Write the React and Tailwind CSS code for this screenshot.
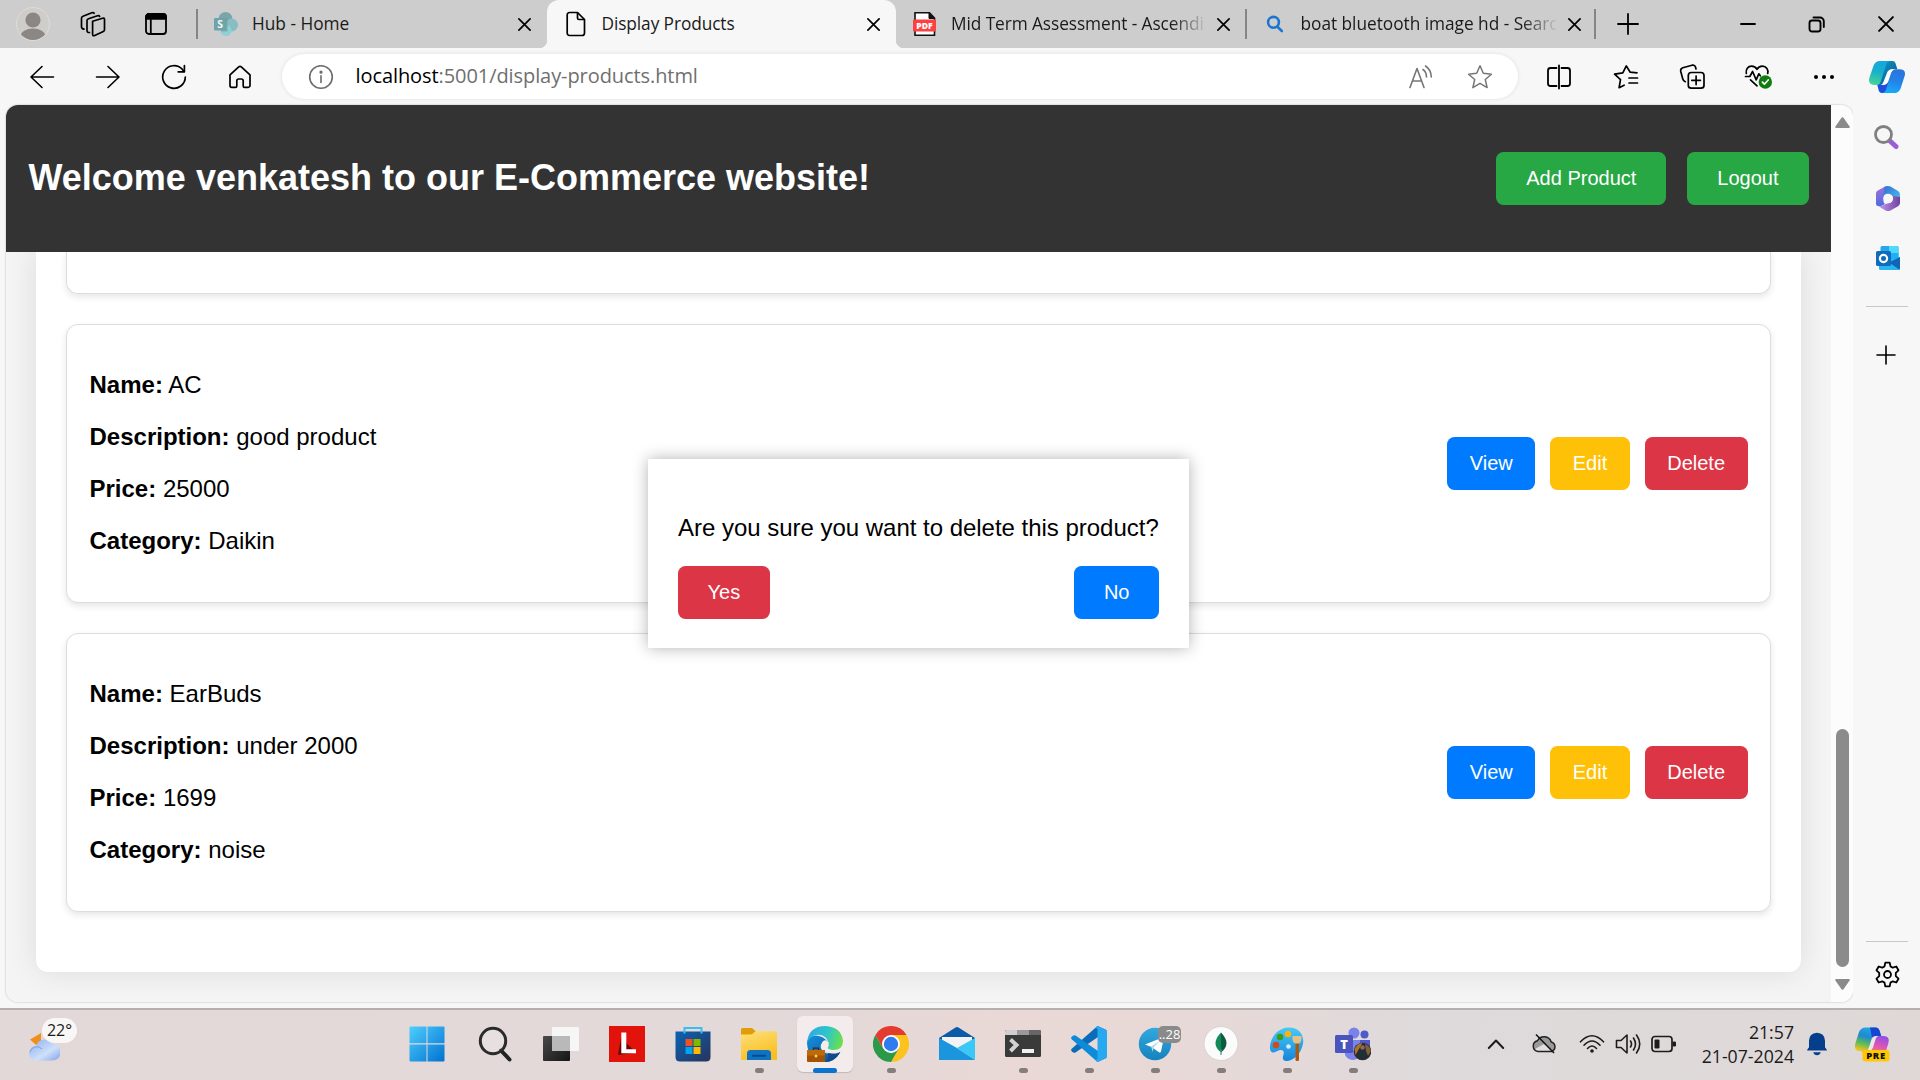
import React from "react";

/* ---------- browser chrome icons ---------- */

function Svg({ w = 24, h, vb = "0 0 24 24", className = "", children, sw = 1.6 }) {
  return (
    <svg
      width={w}
      height={h ?? w}
      viewBox={vb}
      fill="none"
      stroke="currentColor"
      strokeWidth={sw}
      strokeLinecap="round"
      strokeLinejoin="round"
      className={"block shrink-0 " + className}
    >
      {children}
    </svg>
  );
}

const Avatar = () => (
  <svg width="34" height="34" viewBox="0 0 34 34" className="block shrink-0">
    <defs>
      <clipPath id="av"><circle cx="17" cy="17" r="16" /></clipPath>
    </defs>
    <circle cx="17" cy="17" r="16.5" fill="#cfcdca" stroke="#dedcd8" />
    <g clipPath="url(#av)" fill="#8b8784">
      <circle cx="17" cy="13" r="7.6" />
      <ellipse cx="17" cy="29.5" rx="12.4" ry="8" />
    </g>
  </svg>
);

const Workspaces = () => (
  <Svg w={26} vb="0 0 26 26" sw={1.7}>
    <path d="M12.6 10.2 22.6 7.2q1.9-.5 1.9 1.4v10.2q0 1.2-1.2 1.7l-8.6 4q-2 .9-2.100-1.200V11.600q0-1 0-1.400z" />
    <path d="M9.500 21.500q-2.500 .2-2.500-2.200V9.800q0-1.500 1.500-2L17.500 4.800q1.600-.4 2.100.6" />
    <path d="M4 18.200Q1.500 18 1.500 15.800V7.200q0-1.500 1.500-2L11.800 1.800q1.700-.5 2.300.5" />
  </Svg>
);

const TabActions = () => (
  <Svg w={24} vb="0 0 24 24" sw={1.8}>
    <rect x="2" y="2" width="20" height="20" rx="3" />
    <path d="M2 6.800V5a3 3 0 0 1 3-3h14a3 3 0 0 1 3 3v1.800z" fill="#000" />
    <path d="M6.800 7v15" />
  </Svg>
);

const CloseX = ({ size = 13, sw = 1.7 }) => (
  <Svg w={size} vb="0 0 13 13" sw={sw}>
    <path d="M.9.9l11.200 11.200M12.100.9.9 12.100" />
  </Svg>
);

const SharePoint = () => (
  <svg width="24" height="24" viewBox="0 0 24 24" className="block shrink-0">
    <circle cx="11.500" cy="7" r="7" fill="#7ba5a9" />
    <circle cx="17.500" cy="13" r="6.500" fill="#86bec4" />
    <circle cx="12" cy="18.500" r="5.500" fill="#8fd0d5" />
    <rect x="7" y="6" width="6.500" height="13.500" fill="#5f8f93" opacity=".5" />
    <rect x="0" y="6" width="12.500" height="12.500" rx="1" fill="#6fa3a8" />
    <text x="6.200" y="16" fontSize="10.500" fontWeight="700" textAnchor="middle" fill="#f2f7f7" fontFamily="Open Sans, sans-serif">S</text>
  </svg>
);

const FileIcon = () => (
  <Svg w={20} h={26} vb="0 0 20 26" sw={1.700}>
    <path d="M3.500 1.500h8L18.500 8.500v13.500a2.500 2.500 0 0 1-2.500 2.500H3.500a2.300 2.300 0 0 1-2.300-2.500V4a2.300 2.300 0 0 1 2.300-2.500z" />
    <path d="M11.500 1.800V7a1.500 1.500 0 0 0 1.500 1.500h5.200" />
  </Svg>
);

const PdfIcon = () => (
  <svg width="24" height="24" viewBox="0 0 24 24" className="block shrink-0">
    <path d="M2 .8h14.500L21.500 6v17.200H2z" fill="#fff" stroke="#111" strokeWidth="1.600" />
    <path d="M16 .5v6h6" fill="#111" stroke="#111" />
    <rect x="0" y="7.500" width="23" height="12" rx="1" fill="#fb4141" />
    <text x="11.500" y="16.800" fontSize="8.600" fontWeight="800" textAnchor="middle" fill="#fff" fontFamily="Open Sans, sans-serif">PDF</text>
  </svg>
);

const BingSearch = () => (
  <Svg w={18} vb="0 0 18 18" sw={2.600} className="text-[#1b76d1]">
    <circle cx="7.500" cy="7.300" r="5.400" />
    <path d="M11.600 11.800l4.200 4.200" />
  </Svg>
);

const Arrow = ({ flip }) => (
  <Svg w={26} vb="0 0 26 26" sw={1.600} className={flip ? "-scale-x-100" : ""}>
    <path d="M13 2.500 2 13l11 10.500M2.300 13H24.500" />
  </Svg>
);

const Refresh = () => (
  <Svg w={26} vb="0 0 26 26" sw={1.700}>
    <path d="M24.300 13A11.300 11.300 0 1 1 21.200 5.200L23 7.400" />
    <path d="M23.400 1.600v6.200h-6.200" />
  </Svg>
);

const Home = () => (
  <Svg w={24} vb="0 0 24 24" sw={1.700}>
    <path d="M2 9.800 10.700 1.900q1.300-1 2.600 0L22 9.800v10.700a1.800 1.800 0 0 1-1.800 1.800h-3.600a1.400 1.400 0 0 1-1.400-1.400v-5a1.900 1.900 0 0 0-1.900-1.900h-2.600a1.900 1.900 0 0 0-1.900 1.900v5a1.400 1.400 0 0 1-1.400 1.400H3.800A1.800 1.800 0 0 1 2 20.500z" />
  </Svg>
);

const Info = () => (
  <Svg w={26} vb="0 0 26 26" sw={1.600} className="text-[#6b6b6b]">
    <circle cx="13" cy="13" r="11.300" />
    <path d="M13 11.800v6.700" />
    <circle cx="13" cy="8.200" r=".8" fill="currentColor" />
  </Svg>
);

const ReadAloud = () => (
  <Svg w={26} vb="0 0 26 26" sw={1.600} className="text-[#767676]">
    <path d="M2 23.500 9 4.500l7 19M4.800 17h8.400" />
    <path d="M15 5.500q3.500 2.500 3.500 7.500" />
    <path d="M17.500 2q5.500 3.500 5.800 11" />
  </Svg>
);

const Star = () => (
  <Svg w={26} vb="0 0 26 26" sw={1.500} className="text-[#767676]">
    <path d="M13 1.800l3.300 7.500 8.100.9-6.100 5.300 1.800 8.100L13 19.400l-7.100 4.200 1.800-8.100-6.100-5.300 8.100-.9z" />
  </Svg>
);

const SplitScreen = () => (
  <Svg w={26} vb="0 0 26 26" sw={1.800}>
    <path d="M9.500 4H4.500A2.500 2.500 0 0 0 2 6.500v13A2.500 2.500 0 0 0 4.500 22h5M16.500 4h5A2.500 2.500 0 0 1 24 6.500v13a2.500 2.500 0 0 1-2.500 2.500h-5M13 1.500v23" />
    <path d="M9.500 4h1M9.500 22h1M15.500 4h1M15.500 22h1" />
  </Svg>
);

const Favorites = () => (
  <Svg w={26} vb="0 0 26 26" sw={1.700}>
    <path d="M24 8.800l-6.800-.6L13.300 1.900 9.800 8.900 1.600 10.200l5.900 5.500-1.400 8 5-2.500" />
    <path d="M16 14h8.500M16 19h8.500" />
  </Svg>
);

const Collections = () => (
  <Svg w={27} vb="0 0 27 27" sw={1.700}>
    <rect x="9.300" y="9.500" width="15.700" height="15.700" rx="3" />
    <path d="M17.100 13v8.600M12.800 17.300h8.600" />
    <path d="M6.300 18.700Q4.300 18 3.700 15.700L1.700 8.200Q1.300 5.500 3.800 4.700L13 2.200q2.800-.6 3.500 1.800l.5 2" />
  </Svg>
);

const Essentials = () => (
  <Svg w={29} h={26} vb="0 0 29 26" sw={1.700}>
    <path d="M2.300 9.500C1.500 5.500 4 2.200 7.600 2.200c2.400 0 4.400 1.300 5.400 3.100 1-1.800 3-3.100 5.400-3.100 4 0 6.300 3.500 5.300 7.300" />
    <path d="M1.500 12.500h4.300l2.800-5 3.600 8.300 2.600-6 1.500 2" />
    <path d="M6.500 15.800l6.500 6" />
    <circle cx="21.300" cy="18" r="6.700" fill="#107c10" stroke="none" />
    <path d="M18.400 18.200l2 2 3.800-4.200" stroke="#fff" />
  </Svg>
);

const Dots = () => (
  <svg width="22" height="6" viewBox="0 0 22 6" className="block">
    <circle cx="3" cy="3" r="2" /><circle cx="11" cy="3" r="2" /><circle cx="19" cy="3" r="2" />
  </svg>
);

const CopilotMark = () => (
  <svg width="36" height="32" viewBox="0 0 36 32" className="block shrink-0">
    <defs>
      <linearGradient id="cml" x1="0.500" y1="0" x2="0.300" y2="1">
        <stop offset="0" stopColor="#15a8dc" /><stop offset=".45" stopColor="#18b0cc" /><stop offset="1" stopColor="#45d693" />
      </linearGradient>
      <linearGradient id="cmr" x1="0.700" y1="0" x2="0.400" y2="1">
        <stop offset="0" stopColor="#2a73dc" /><stop offset=".5" stopColor="#2383e8" /><stop offset="1" stopColor="#18aaf8" />
      </linearGradient>
      <linearGradient id="cmt" x1="0" y1="0" x2="1" y2="1">
        <stop offset="0" stopColor="#0f9fd0" /><stop offset="1" stopColor="#0a4f86" />
      </linearGradient>
    </defs>
    <path d="M14 0h9.500q2.300 0 3 2.200l1.900 6H23.500q-3.500 0-4.600 3.400L15 24H8.500l5-14z" fill="url(#cmt)" />
    <path d="M8.200 23.500h5.500l7.500-12.500h5L19 30l-4 2h-2q-2.500 0-3.200-2.300z" fill="#1d4fdc" />
    <path d="M11 0h9.500q-2.500 1-3.500 4l-5.500 17q-1 3-3.500 3H5.300Q-1.200 23.600.3 17L4.500 4.800Q6.200 0 11 0z" fill="url(#cml)" />
    <path d="M26.500 8.300h4q6.800.2 5.200 6.500l-4 12.500q-1.700 4.700-6 4.700H13q3-.3 4-3.500l5.500-17q1-3.200 4-3.200z" fill="url(#cmr)" />
    <path d="M17.800 12.500q1-3.800 4.800-4.200h3.200q-2.500.3-3.500 3.200L19.500 20q-1.200 3.500-4.500 4h-3.500q2-.4 2.700-2.500z" fill="#fbfdff" />
  </svg>
);

/* ---------- side bar icons ---------- */

const SideSearch = () => (
  <svg width="26" height="26" viewBox="0 0 26 26" className="block">
    <path d="M17 17l6 5.500" stroke="#9a5fd6" strokeWidth="5" strokeLinecap="round" />
    <circle cx="10.500" cy="10.500" r="8" fill="none" stroke="#808080" strokeWidth="2.800" />
  </svg>
);

const M365 = () => (
  <svg width="26" height="27" viewBox="0 0 26 27" className="block">
    <defs>
      <linearGradient id="m1" x1="0" y1="0" x2="0" y2="1"><stop stopColor="#a86fd8" /><stop offset="1" stopColor="#4b6fe0" /></linearGradient>
      <linearGradient id="m2" x1="0" y1="0" x2="1" y2="1"><stop stopColor="#2f6fd0" /><stop offset="1" stopColor="#4fc3f0" /></linearGradient>
      <linearGradient id="m3" x1="0" y1="0" x2="1" y2="0"><stop stopColor="#c49af0" /><stop offset="1" stopColor="#7040a0" /></linearGradient>
    </defs>
    <path d="M11 1 2.800 5.500Q1 6.500 1 8.500v10.200Q1 21 3 21l3 .3 4-2.300q-1.500-1-1.500-3z" fill="url(#m1)" />
    <path d="M9.500 2Q12.500 0 15.500 1.600L23 6q2 1.200 2 3.500v8l-7-6.200-4.300-2.200q-1.300-.4-2.500.2L8 11z" fill="url(#m2)" />
    <path d="M25 12v6q0 2-2 3.300L15.500 25.500q-2.500 1.200-5 0L3.500 21.300q4.500 0 7-2.300l5.300-1.600Q18 16 18 13.500L17.500 11z" fill="url(#m3)" />
    <circle cx="13" cy="13.500" r="4.800" fill="#f7f7f7" />
  </svg>
);

const Outlook = () => (
  <svg width="26" height="26" viewBox="0 0 26 26" className="block">
    <path d="M7 1h15q1.500 0 1.500 1.500V18H5.500V2.500Q5.500 1 7 1z" fill="#28a8ea" />
    <path d="M14 1h8q1.500 0 1.500 1.500V8H14z" fill="#50d9ff" />
    <path d="M5.500 8H14v8H5.500z" fill="#0f78d0" />
    <path d="M14 8h9.500v7H14z" fill="#1db0f2" />
    <path d="M4 17.500 25 12v11.500q0 1.500-1.500 1.500H5.500Q4 25 4 23.500z" fill="#29b4f2" />
    <path d="M25 12v11q0 1-.8 1.600L14 17.500z" fill="#1066b5" />
    <rect x="1" y="6" width="15" height="15" rx="1.500" fill="#0f6cbd" />
    <circle cx="8.500" cy="13.500" r="3.600" fill="none" stroke="#fff" strokeWidth="2.200" />
  </svg>
);

const Gear = () => (
  <Svg w={27} vb="0 0 27 27" sw={1.800}>
    <path d="M11.300 1.700h4.400l.8 3.700 2.300 1.300 3.500-1.200 2.200 3.800-2.700 2.600v3.200l2.700 2.600-2.200 3.800-3.500-1.200-2.300 1.300-.8 3.700h-4.400l-.8-3.700-2.300-1.300-3.500 1.200-2.200-3.800 2.700-2.600v-3.200L2.500 9.300l2.200-3.800 3.500 1.200 2.300-1.300z" />
    <circle cx="13.500" cy="13.500" r="3.500" />
  </Svg>
);

/* ---------- task bar icons ---------- */

const Weather = () => (
  <svg width="31" height="30" viewBox="0 0 31 30" className="block">
    <defs>
      <linearGradient id="cl" x1="0" y1="0" x2="1" y2="1"><stop stopColor="#86aef0" /><stop offset=".6" stopColor="#cfe0fa" /><stop offset="1" stopColor="#7fa3e8" /></linearGradient>
    </defs>
    <path d="M1 8.500 12 2v8L7 14z" fill="#f0901c" />
    <path d="M7.500 29.500a7.200 7.200 0 0 1-.5-14.400 9.500 9.500 0 0 1 17-2.400 8.400 8.400 0 0 1-1.200 16.800z" fill="url(#cl)" />
    <path d="M1 21a7 7 0 0 1 12-3" stroke="#7ba0e0" fill="none" strokeWidth="1" />
  </svg>
);

const Windows = () => (
  <svg width="36" height="36" viewBox="0 0 36 36" className="block">
    <defs>
      <linearGradient id="wn" gradientUnits="userSpaceOnUse" x1="0" y1="0" x2="36" y2="36"><stop stopColor="#4fd0ff" /><stop offset="1" stopColor="#0070d0" /></linearGradient>
    </defs>
    <g fill="url(#wn)">
      <path d="M1.500.5h16v16.800H.5V1.500q0-1 1-1z" /><path d="M18.500.5h16q1 0 1 1v15.800h-17z" />
      <path d="M.5 18.500h17v17h-16q-1 0-1-1z" /><path d="M18.500 18.500h17v16q0 1-1 1h-16z" />
    </g>
  </svg>
);

const TaskSearch = () => (
  <svg width="34" height="36" viewBox="0 0 34 36" className="block">
    <path d="M23 24.500l8.500 9" stroke="#222" strokeWidth="4" strokeLinecap="round" />
    <circle cx="15" cy="15" r="12.700" fill="#fff" fillOpacity=".2" stroke="#2b2b2b" strokeWidth="3" />
  </svg>
);

const TaskView = () => (
  <svg width="36" height="36" viewBox="0 0 36 36" className="block">
    <defs>
      <linearGradient id="tv" x1="0" y1="0" x2="1" y2="1"><stop stopColor="#4a4a4a" /><stop offset="1" stopColor="#151515" /></linearGradient>
    </defs>
    <rect x="0" y="10" width="27" height="25" rx="1" fill="url(#tv)" />
    <rect x="9" y="1" width="27" height="24" rx="1" fill="#f6f6f6" />
    <rect x="9" y="10" width="18" height="15" fill="#b9b9b9" />
  </svg>
);

const LIcon = () => (
  <svg width="36" height="36" viewBox="0 0 36 36" className="block">
    <rect width="36" height="36" fill="#e2130b" />
    <path d="M12 12 9 29l18-2.500z" fill="#6b0805" />
    <path d="M12.300 6.500h5v16.800H27v4H12.300z" fill="#fff" />
  </svg>
);

const Store = () => (
  <svg width="36" height="36" viewBox="0 0 36 36" className="block">
    <defs>
      <linearGradient id="st" x1="0" y1="0" x2="1" y2="1"><stop stopColor="#0a63b4" /><stop offset="1" stopColor="#28335c" /></linearGradient>
    </defs>
    <path d="M.5 5.500h35V31q0 4.500-4.500 4.500H5Q.5 35.500.5 31z" fill="url(#st)" />
    <path d="M9.500 7.500V2h17v5.500" fill="none" stroke="#35bff5" strokeWidth="2" />
    <path d="M10.500 13h7v7h-7z" fill="#f25022" /><path d="M18.500 13h7v7h-7z" fill="#7fba00" />
    <path d="M10.500 21h7v7h-7z" fill="#00a4ef" /><path d="M18.500 21h7v7h-7z" fill="#ffb900" />
  </svg>
);

const Folder = () => (
  <svg width="36" height="36" viewBox="0 0 36 36" className="block">
    <defs>
      <linearGradient id="fo" x1="0" y1="0" x2=".4" y2="1"><stop stopColor="#ffe07a" /><stop offset="1" stopColor="#f9bf22" /></linearGradient>
    </defs>
    <path d="M0 3.500Q0 2 1.500 2H11l5 4.500V12H0z" fill="#e09d06" />
    <path d="M0 8.500h9q2 0 3.500-1.500l2-1.800H34.500Q36 5.200 36 6.700V34H0z" fill="url(#fo)" />
    <path d="M6 34v-6.500Q6 24 9.500 24h17q3.500 0 3.500 3.500V34z" fill="#0f73c4" />
    <path d="M12 29.800h12" stroke="#0a4786" strokeWidth="2" strokeLinecap="round" />
  </svg>
);

const Edge = () => (
  <svg width="36" height="36" viewBox="0 0 36 36" className="block">
    <defs>
      <linearGradient id="e1" x1="0" y1=".3" x2="1" y2=".5"><stop stopColor="#2aa9e8" /><stop offset=".55" stopColor="#2fc6c9" /><stop offset="1" stopColor="#6be04a" /></linearGradient>
      <linearGradient id="e2" x1="0" y1="0" x2="1" y2="1"><stop stopColor="#1590dc" /><stop offset="1" stopColor="#0c4f9e" /></linearGradient>
    </defs>
    <path d="M0 17q0-4 4.500-6.500t11 .8Q22 15 21.500 19.500q-4.500-5.500-7-1.500T17 26q5.500 4.500 16.300.2Q27.500 36 18 36 1 35.500 0 17z" fill="url(#e2)" />
    <path d="M33.300 26.200Q27.500 36 18 36q7.500-8.500-1-10 7 2.500 16.300.2z" fill="#114a8b" />
    <path d="M0 17Q1.500 0 18.500 0 34 .8 36 14.500q.2 9.500-9.500 9.500-6.500-.3-6-2.500 2-1.800 1.300-4.500Q19.500 9 11 8.800 3 9 0 17z" fill="url(#e1)" />
    <path d="M14.500 18q1.500-4.500 5-3.500 3 2 1.500 6.200-1.500 2 2.500 3-4 1.800-7.500-1t-1.500-4.700z" fill="#f4ecec" />
    <path d="M18 24q8 4.500 15 1.500l-2 1.500q-6.500 1.500-13-1.500z" fill="#f4ecec" />
    <rect x="0" y="24" width="18" height="12" rx="1" fill="#a45204" />
    <rect x="0" y="24" width="18" height="5.500" rx="1" fill="#bf6a08" />
    <path d="M6.500 24v-1.800h5V24" stroke="#442400" fill="none" strokeWidth="1.200" />
    <circle cx="9" cy="30" r="1.500" fill="#ffd24a" />
  </svg>
);

const Chrome = () => (
  <svg width="36" height="36" viewBox="0 0 36 36" className="block">
    <path d="M18 9h15.600A18 18 0 0 1 18 36l7.800-13.500z" fill="#fcc31e" />
    <path d="M2.400 9 10.200 22.500 18 27l7.800-4.500L18 36A18 18 0 0 1 2.400 9z" fill="#2a9a48" />
    <path d="M2.400 9A18 18 0 0 1 33.600 9H18l-7.800 13.500z" fill="#e33b2e" />
    <circle cx="18" cy="18" r="9" fill="#fff" /><circle cx="18" cy="18" r="7.200" fill="#2f7bf0" />
  </svg>
);

const Mail = () => (
  <svg width="36" height="36" viewBox="0 0 36 36" className="block">
    <path d="M0 12 16.500 1.500q1.500-1 3 0L36 12v8H0z" fill="#0b5ba8" />
    <path d="M3 11h30v9L18 26 3 20z" fill="#f3f3f3" />
    <path d="M0 12v22h36L18 22z" fill="#1e97e0" />
    <path d="M36 12v22L18 22z" fill="#39c8f7" />
    <path d="M0 12v22h36z" fill="#1b92de" opacity=".35" />
  </svg>
);

const Terminal = () => (
  <svg width="36" height="36" viewBox="0 0 36 36" className="block">
    <rect x="0" y="4" width="36" height="27" rx="1.500" fill="#3a3a3a" />
    <path d="M0 9V5.500Q0 4 1.500 4H12v5z" fill="#cfcfcf" /><path d="M12 4h12v5H12z" fill="#999" /><path d="M24 4h10.500Q36 4 36 5.500V9H24z" fill="#666" />
    <path d="M5.500 13.500 11.500 19l-6 6" fill="none" stroke="#d4d4d4" strokeWidth="4" />
    <rect x="17" y="23" width="12" height="4" fill="#f0f0f0" />
  </svg>
);

const VsCode = () => (
  <svg width="36" height="36" viewBox="0 0 36 36" className="block">
    <path d="M26.500 0 36 4.300 27 11 4.500 26.500Q3.300 27.300 2 26.300L.7 25.200Q-.5 24 .7 22.800z" fill="#0a6cb8" />
    <path d="M26.500 36 36 31.700 27 25 4.500 9.500Q3.300 8.700 2 9.700L.7 10.800Q-.5 12 .7 13.200z" fill="#0d8ad8" />
    <path d="M26.500 36Q24.800 35.500 25 33.800l1.500-1V3L25 2.200Q24.800.5 26.500 0L35 4q1 .5 1 1.700v24.600q0 1.200-1 1.700z" fill="#27a9f2" />
  </svg>
);

const Telegram = () => (
  <svg width="36" height="36" viewBox="0 0 36 36" className="block">
    <defs><linearGradient id="tg" x1="0" y1="0" x2="0" y2="1"><stop stopColor="#32a8e0" /><stop offset="1" stopColor="#1583bd" /></linearGradient></defs>
    <circle cx="18" cy="18" r="16.200" fill="url(#tg)" />
    <path d="M8 18.500 25.500 11.500q1.500-.5 1.200 1.200L24 25.500q-.5 1.500-2 .7L14.500 21z" fill="#fff" />
    <path d="M14 20.500 23.500 14.500 16.500 21.500 15.800 26z" fill="#b5d8ee" />
  </svg>
);

const Mongo = () => (
  <svg width="36" height="36" viewBox="0 0 36 36" className="block">
    <circle cx="18" cy="17.500" r="17" fill="#fbfbfb" stroke="#d0cccb" strokeWidth=".8" />
    <path d="M18 6.500q5.500 5.500 5.500 11-.3 5-5.500 9z" fill="#0b5c43" />
    <path d="M18 6.500q-5.500 5.500-5.500 11 .3 5 5.500 9z" fill="#118a5a" />
    <path d="M18 23v6" stroke="#4a8f78" strokeWidth="1.200" />
  </svg>
);

const Paint = () => (
  <svg width="36" height="36" viewBox="0 0 36 36" className="block">
    <defs><linearGradient id="pa" x1="0" y1="0" x2="0" y2="1"><stop stopColor="#45cbf7" /><stop offset="1" stopColor="#1684dc" /></linearGradient></defs>
    <path d="M19 1.500C30 1 35.500 9 34 18c-2 10-10 17-16.500 17-4.500 0-4-4-3-6.500 1-3-.5-5-3.500-4.500-3 .8-5 3-7.500 2.500C-.5 25 .5 17 4 11 7.500 5 13 2 19 1.500z" fill="url(#pa)" />
    <circle cx="19.500" cy="20.500" r="2.300" fill="#d8eef8" />
    <circle cx="7" cy="19" r="3.300" fill="#d24a1a" /><circle cx="11" cy="11" r="3.300" fill="#3f9a18" /><circle cx="19" cy="8" r="3.300" fill="#fbb20e" />
    <rect x="26.500" y="16" width="3.500" height="19" rx="1.200" fill="#a85a10" />
    <path d="M23.500 10h9v3q0 3-2.500 4.500h-4Q23.500 16 23.500 13z" fill="#e3c08a" />
  </svg>
);

const Teams = () => (
  <svg width="36" height="36" viewBox="0 0 36 36" className="block">
    <circle cx="19" cy="7" r="5.500" fill="#7b83eb" /><circle cx="29.500" cy="8.500" r="4" fill="#5059c9" />
    <path d="M22 14h13v10q0 5-6 5.500h-7z" fill="#5059c9" />
    <path d="M10 14h15v12q0 7.500-6.500 8-6 0-8.500-5z" fill="#7b83eb" />
    <rect x="0" y="9" width="18" height="18" rx="1.500" fill="#4b53bc" />
    <text x="9" y="22.600" fontSize="13" fontWeight="800" textAnchor="middle" fill="#fff" fontFamily="Open Sans, sans-serif">T</text>
    <circle cx="27.500" cy="25.500" r="8.800" fill="#2c2a2c" />
    <path d="M19.500 23q3-6 8-6l-3 5-4 7z" fill="#a8752e" /><path d="M30 18q5 2 6 7l-3 5-2-5z" fill="#805f3e" />
    <circle cx="27.500" cy="21.500" r="2.300" fill="#8a6a58" /><path d="M23 31l2-6h5l3 6q-5 4-10 0z" fill="#1d3038" />
  </svg>
);

const OneDriveOff = () => (
  <svg width="26" height="22" viewBox="0 0 26 22" className="block">
    <path d="M7 18.500a5.500 5.500 0 0 1-.5-10.800 7.500 7.500 0 0 1 13.700 1.200 5 5 0 0 1 .3 9.600z" fill="#9a9a9a" />
    <path d="M3 16.500 13 11l9 6.500-2 1H6z" fill="#e0e0e0" />
    <path d="M7 18.500a5.500 5.500 0 0 1-.5-10.800 7.500 7.500 0 0 1 13.700 1.200 5 5 0 0 1 .3 9.600z" fill="none" stroke="#222" strokeWidth="1.500" />
    <path d="M5 1.500 23 20" stroke="#111" strokeWidth="1.500" />
  </svg>
);

const Wifi = () => (
  <Svg w={26} h={20} vb="0 0 26 20" sw={1.600} className="text-[#1c1c1c]">
    <path d="M1.500 7.800q11.500-12 23 0M5 11.200q8-8.500 16 0M8.500 14.500q4.500-5 9 0" />
    <circle cx="13" cy="17" r="1.800" fill="currentColor" stroke="none" />
  </Svg>
);

const Speaker = () => (
  <Svg w={26} h={22} vb="0 0 26 22" sw={1.600} className="text-[#1c1c1c]">
    <path d="M1.500 7.500H6l6-5.500v18l-6-5.500H1.500z" />
    <path d="M15.500 8q2 3 0 6M18.500 5q4 6 0 12M21.500 2q6.500 9 0 18" />
  </Svg>
);

const Battery = () => (
  <svg width="26" height="18" viewBox="0 0 26 18" className="block">
    <rect x="1" y="1.500" width="20" height="15" rx="3" fill="none" stroke="#1c1c1c" strokeWidth="1.700" />
    <rect x="3.500" y="4.500" width="5" height="9" rx="1" fill="#1c1c1c" />
    <rect x="21.500" y="6.500" width="3.500" height="5" rx="1.300" fill="#1c1c1c" />
  </svg>
);

const Bell = () => (
  <svg width="22" height="24" viewBox="0 0 22 24" className="block">
    <path d="M11 .8q7.800.4 8 8v6.500l1.800 2.500v.8H1.200v-.8L3 15.300V8.800q.2-7.600 8-8z" fill="#053f8c" />
    <path d="M7.200 20.300h7.600q-1 3-3.800 3t-3.800-3z" fill="#053f8c" />
  </svg>
);

const CopilotPre = () => (
  <svg width="36" height="35" viewBox="0 0 36 35" className="block">
    <defs>
      <linearGradient id="cp1" x1=".6" y1="0" x2=".3" y2="1"><stop stopColor="#1fa8e8" /><stop offset=".4" stopColor="#1f8ad0" /><stop offset=".7" stopColor="#5dbb5a" /><stop offset="1" stopColor="#f3c41a" /></linearGradient>
      <linearGradient id="cp2" x1=".7" y1="0" x2=".3" y2="1"><stop stopColor="#8f4fe8" /><stop offset=".5" stopColor="#e055b0" /><stop offset="1" stopColor="#fa8a5a" /></linearGradient>
    </defs>
    <path d="M15 .5h6.500q3 0 4 3l1.700 5.500H21q-2.500 0-3.300 2.600L14 24H5.500Q-.3 23.500 1.200 17L5 5Q7 .5 11.500.5z" fill="url(#cp1)" />
    <path d="M20 9h9.500q6.500.3 5 6.500L32 24q-1 3.500-4 3.500H11q-2-.3-3-3.500h5.500q2 0 2.700-2z" fill="url(#cp2)" />
    <path d="M16 .5h5.500q3 0 4 3l1.700 5.500H21q-2 0-3 1.600z" fill="#1646cf" />
    <path d="M17.700 13q1-3.500 4-4h2.800q-2 .5-2.800 2.700L19 20.500q-1 3-3.800 3.500h-3q1.700-.5 2.300-2.200z" fill="#efe6ea" />
    <rect x="8.500" y="23" width="27" height="11.500" rx="3" fill="#ffc800" />
    <text x="22" y="32.200" fontSize="9.500" fontWeight="800" letterSpacing=".7" textAnchor="middle" fill="#111" fontFamily="Open Sans, sans-serif">PRE</text>
  </svg>
);

/* ---------- browser ---------- */

const UI = "font-['Open_Sans','Noto_Sans',sans-serif]";
const FADE = "[mask-image:linear-gradient(to_right,#000_86%,transparent)]";

function Tab({ icon, title, active, fade, track = "" }) {
  return (
    <div className={"relative flex h-12 w-[349.5px] shrink-0 items-center pl-[17px] pr-4 " + (active ? "rounded-t-[12px] bg-[#f7f7f7]" : "")}>
      {active && (
        <>
          <span className="absolute -left-2 bottom-0 size-2 bg-[radial-gradient(circle_at_0_0,transparent_8px,#f7f7f7_8.5px)]" />
          <span className="absolute -right-2 bottom-0 size-2 bg-[radial-gradient(circle_at_100%_0,transparent_8px,#f7f7f7_8.5px)]" />
        </>
      )}
      <span className="flex w-6 shrink-0 justify-center">{icon}</span>
      <span className={"ml-3.5 flex-1 whitespace-nowrap text-[17.3px] leading-6 text-[#1a1a1a] " + track + " " + (fade ? FADE : "")}>{title}</span>
      <span className="ml-2.5"><CloseX /></span>
    </div>
  );
}

const Divider = () => <span className="-ml-px -mr-px h-[30px] w-0.5 shrink-0 bg-[#858585]" />;
const Cell = ({ children, className = "w-[66px]" }) => <span className={"flex shrink-0 items-center justify-center " + className}>{children}</span>;

function TabStrip() {
  return (
    <div className={"flex h-12 shrink-0 items-center bg-[#cdcdcd] text-black " + UI}>
      <Cell className="ml-4 w-[34px]"><Avatar /></Cell>
      <Cell className="ml-[29.5px] w-[26px]"><Workspaces /></Cell>
      <Cell className="ml-[38.5px] w-6"><TabActions /></Cell>
      <span className="w-[29px] shrink-0" />
      <Divider />
      <Tab icon={<SharePoint />} title="Hub - Home" />
      <Tab icon={<FileIcon />} title="Display Products" active track="tracking-[-0.09px]" />
      <Tab icon={<PdfIcon />} title="Mid Term Assessment - Ascendi" fade track="tracking-[-0.08px]" />
      <Divider />
      <Tab icon={<BingSearch />} title="boat bluetooth image hd - Searc" fade track="tracking-[-0.03px]" />
      <Divider />
      <Cell className="w-[65px]">
        <Svg w={22} vb="0 0 22 22" sw={1.800}><path d="M11 1v20M1 11h20" /></Svg>
      </Cell>
      <div className="ml-auto flex">
        <Cell className="w-[69px]"><Svg w={16} vb="0 0 16 16" sw={1.900}><path d="M1 8h14" /></Svg></Cell>
        <Cell className="w-[69px]">
          <Svg w={17} vb="0 0 17 17" sw={1.900}>
            <rect x="1.500" y="4.500" width="11" height="11" rx="2.500" />
            <path d="M5.500 1.500H12a3.800 3.800 0 0 1 3.800 3.800V11" />
          </Svg>
        </Cell>
        <Cell className="w-[69px]"><CloseX size={16} sw={1.600} /></Cell>
      </div>
    </div>
  );
}

function Toolbar() {
  return (
    <div className={"flex h-[57px] shrink-0 items-center bg-[#f7f7f7] pl-[9px] text-black " + UI}>
      <Cell><Arrow /></Cell>
      <Cell><Arrow flip /></Cell>
      <Cell><Refresh /></Cell>
      <Cell><Home /></Cell>
      <div className="ml-[9px] flex h-[45px] w-[1236px] shrink-0 items-center rounded-full bg-white pl-[26px] pr-[25px] shadow-[0_0_4px_rgba(0,0,0,0.1)]">
        <Info />
        <p className="ml-[21.500px] flex-1 whitespace-nowrap pb-px text-[20px] tracking-[-0.080px] text-[#6f6f6f]">
          <span className="text-black">localhost</span>:5001/display-products.html
        </p>
        <ReadAloud />
        <span className="ml-[33px]"><Star /></span>
      </div>
      <span className="w-2 shrink-0" />
      <Cell><SplitScreen /></Cell>
      <Cell className="w-[67px]"><Favorites /></Cell>
      <Cell><Collections /></Cell>
      <Cell><Essentials /></Cell>
      <Cell><Dots /></Cell>
      <Cell className="w-[60px]"><CopilotMark /></Cell>
    </div>
  );
}

/* ---------- shop page ---------- */

const HeaderButton = ({ children }) => (
  <button className="h-[53px] rounded-[7.5px] bg-[#28a745] px-[30px] pb-0.5 text-[20px] text-white">{children}</button>
);

function Product({ name, description, price, category }) {
  const rows = [["Name", name], ["Description", description], ["Price", price], ["Category", category]];
  return (
    <article className="flex h-[279px] shrink-0 items-center justify-between rounded-[12px] border border-[#ddd] bg-white px-[22.500px] shadow-[0_3px_7px_rgba(0,0,0,0.1)]">
      <div className="flex flex-col gap-6 pb-0.5">
        {rows.map(([k, v]) => (
          <p key={k} className="text-[24px] leading-7 text-black"><strong>{k}:</strong> {v}</p>
        ))}
      </div>
      <div className="flex gap-[15px] text-[20px] text-white">
        <button className="h-[53px] rounded-[7.500px] bg-[#007bff] px-[22.500px] pb-0.5">View</button>
        <button className="h-[53px] rounded-[7.500px] bg-[#ffc107] px-[22.500px] pb-0.5">Edit</button>
        <button className="h-[53px] rounded-[7.500px] bg-[#dc3545] px-[22.500px] pb-0.5">Delete</button>
      </div>
    </article>
  );
}

function ConfirmDialog() {
  return (
    <div className="absolute inset-0 flex items-center justify-center">
      <div className="w-[541px] bg-white px-[30px] pb-[29.500px] pt-[55px] shadow-[0_0_15px_rgba(0,0,0,0.3)]">
        <p className="whitespace-nowrap text-[24px] leading-7 tracking-[-0.020px] text-black">Are you sure you want to delete this product?</p>
        <div className="mt-[23.500px] flex justify-between text-[20px] text-white">
          <button className="h-[53px] rounded-[7.500px] bg-[#dc3545] px-[29.500px] pb-px">Yes</button>
          <button className="h-[53px] rounded-[7.500px] bg-[#007bff] px-[29.500px] pb-px">No</button>
        </div>
      </div>
    </div>
  );
}

function ShopPage() {
  return (
    <div className="relative flex w-[1825px] shrink-0 flex-col bg-[#f4f4f4] font-['Liberation_Sans',Arial,sans-serif]">
      <header className="flex h-[147px] shrink-0 items-center justify-between bg-[#333] px-[22.500px]">
        <h1 className="pb-0.5 text-[36px] font-bold leading-none text-white">Welcome venkatesh to our E-Commerce website!</h1>
        <div className="flex gap-[21px]">
          <HeaderButton>Add Product</HeaderButton>
          <HeaderButton>Logout</HeaderButton>
        </div>
      </header>
      <div className="flex-1 overflow-hidden">
        <main className="mx-[30px] flex h-[720px] flex-col gap-[30px] rounded-b-[12px] bg-white px-[30px] shadow-[0_0_30px_rgba(0,0,0,0.1)]">
          <div className="-mt-px h-[43px] shrink-0 rounded-b-[12px] border border-t-0 border-[#ddd] shadow-[0_3px_7px_rgba(0,0,0,0.1)]" />
          <Product name="AC" description="good product" price="25000" category="Daikin" />
          <Product name="EarBuds" description="under 2000" price="1699" category="noise" />
        </main>
      </div>
      <ConfirmDialog />
    </div>
  );
}

function Scrollbar() {
  return (
    <div className="flex w-[22px] flex-col items-center bg-[#fcfcfc] pb-3 pt-3">
      <svg width="15" height="11" viewBox="0 0 15 11" className="block shrink-0"><path d="M7.500 1.200 13.800 10H1.200z" fill="#8b8b8b" stroke="#8b8b8b" strokeWidth="2" strokeLinejoin="round" /></svg>
      <span className="mb-3 mt-auto h-[238px] w-[13px] shrink-0 rounded-full bg-[#8b8b8b]" />
      <svg width="15" height="11" viewBox="0 0 15 11" className="block shrink-0"><path d="M7.500 9.800 13.800 1H1.200z" fill="#8b8b8b" stroke="#8b8b8b" strokeWidth="2" strokeLinejoin="round" /></svg>
    </div>
  );
}

function Sidebar() {
  return (
    <aside className="flex h-full flex-1 flex-col items-center bg-[#f7f7f7] text-black">
      <span className="mt-[19px] mr-px"><SideSearch /></span>
      <span className="mt-[35px] ml-0.5"><M365 /></span>
      <span className="mt-[33px] ml-0.5"><Outlook /></span>
      <span className="mt-[35px] h-px w-[42px] shrink-0 bg-[#c8c8c8]" />
      <Svg w={20} vb="0 0 20 20" sw={1.600} className="mr-px mt-[38px]"><path d="M10 1v18M1 10h18" /></Svg>
      <span className="mt-auto h-px w-[42px] shrink-0 bg-[#c8c8c8]" />
      <span className="mb-[20px] ml-px mt-[19px]"><Gear /></span>
    </aside>
  );
}

/* ---------- task bar ---------- */

function TaskItem({ children, state }) {
  return (
    <div className="relative flex h-[70px] w-[66px] shrink-0 items-center justify-center pb-[2px]">
      {state === "active" && <span className="absolute left-[5px] top-1.5 h-14 w-14 rounded-[6px] bg-[#f4ecec] shadow-[0_1px_1px_rgba(0,0,0,0.15)]" />}
      <span className="relative">{children}</span>
      {state === "active" && <span className="absolute bottom-[7px] left-[21px] h-[5px] w-6 rounded-full bg-[#0b72d0]" />}
      {state === "open" && <span className="absolute bottom-[7px] left-[28.500px] h-[5px] w-[9px] rounded-full bg-[#857d7c]" />}
    </div>
  );
}

function Taskbar() {
  return (
    <div className={"flex h-[72px] shrink-0 items-center border-t-2 border-[#b5b0af] bg-[linear-gradient(90deg,#e1d8d7,#e3d9d8_25%,#e2d9d8_40%,#e9d8d6_53%,#e7d9d7_62%,#dedadb_75%,#dfd8d7)] " + UI}>
      <div className="relative flex h-full w-[394px] shrink-0 items-end pb-[19px] pl-[29px]">
        <Weather />
        <span className="absolute left-[42px] top-2 flex h-[25px] w-[35px] items-center justify-center rounded-full bg-[#f9f7f5] pb-0.5 text-[16px] text-[#1b1b1b]">22°</span>
      </div>
      <TaskItem><Windows /></TaskItem>
      <span className="w-0.5 shrink-0" />
      <TaskItem><TaskSearch /></TaskItem>
      <TaskItem><TaskView /></TaskItem>
      <TaskItem><LIcon /></TaskItem>
      <TaskItem><Store /></TaskItem>
      <TaskItem state="open"><Folder /></TaskItem>
      <TaskItem state="active"><Edge /></TaskItem>
      <TaskItem state="open"><Chrome /></TaskItem>
      <TaskItem><Mail /></TaskItem>
      <TaskItem state="open"><Terminal /></TaskItem>
      <TaskItem state="open"><VsCode /></TaskItem>
      <TaskItem state="open">
        <Telegram />
        <span className="absolute left-[21px] top-0 flex h-[17px] w-[23px] items-center justify-center rounded-[5px] bg-[#8a8a8a] text-[13px] leading-none text-white">..28</span>
      </TaskItem>
      <TaskItem state="open"><Mongo /></TaskItem>
      <TaskItem state="open"><Paint /></TaskItem>
      <TaskItem state="open"><Teams /></TaskItem>
      <div className="ml-auto flex items-center pb-[2px]">
        <Svg w={18} h={12} vb="0 0 18 12" sw={2} className="text-[#1c1c1c]"><path d="M1.800 10 9 2.500l7.200 7.500" /></Svg>
        <span className="ml-[26px]"><OneDriveOff /></span>
        <span className="ml-[22px]"><Wifi /></span>
        <span className="ml-[10px]"><Speaker /></span>
        <span className="ml-[10px]"><Battery /></span>
        <p className="ml-[10px] w-[107px] text-right text-[17.700px] leading-6 text-[#1b1b1b]">21:57<br />21-07-2024</p>
        <span className="ml-[12px]"><Bell /></span>
        <span className="ml-[26px] mr-[30px]"><CopilotPre /></span>
      </div>
    </div>
  );
}

export default function App() {
  return (
    <div className="flex h-[1080px] w-[1920px] flex-col overflow-hidden bg-[#f7f7f7]">
      <TabStrip />
      <Toolbar />
      <div className="flex h-[903px] shrink-0 pl-1.5">
        <div className="flex h-[897px] w-[1847px] shrink-0 overflow-hidden rounded-[12px] shadow-[0_0_2px_rgba(0,0,0,0.3)]">
          <ShopPage />
          <Scrollbar />
        </div>
        <Sidebar />
      </div>
      <Taskbar />
    </div>
  );
}
